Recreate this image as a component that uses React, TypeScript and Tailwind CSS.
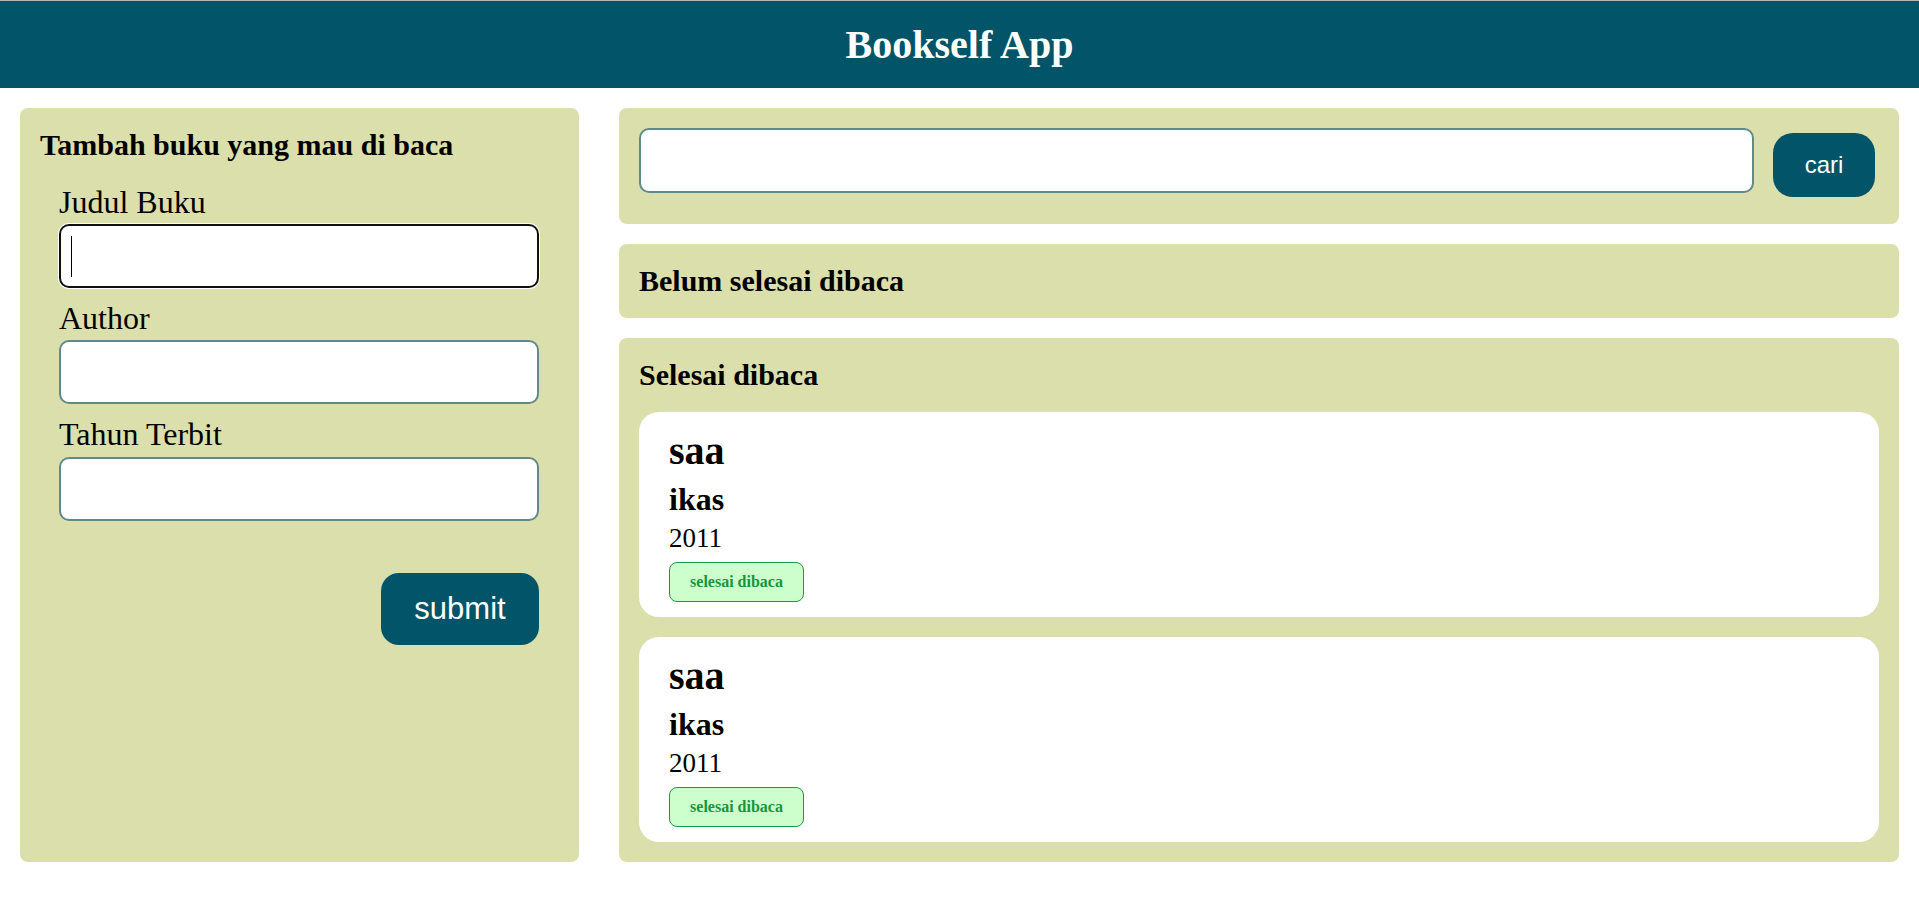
import React from "react";

function BookCard() {
  return (
    <div className="rounded-[20px] bg-white pt-[16px] pb-[15px] pl-[30px] pr-[30px]">
      <h2 className="text-[40px] leading-[46px] font-bold">saa</h2>
      <h3 className="mt-[8px] text-[32px] leading-[34px] font-bold">ikas</h3>
      <p className="mt-[7px] text-[27px] leading-[30px]">2011</p>
      <button className="mt-[9px] flex h-[40px] w-[135px] items-center justify-center rounded-[8px] border border-[#1a9a45] bg-[#ccffcc] text-[16px] font-bold text-[#15963f] font-['Liberation_Serif',serif]">
        selesai dibaca
      </button>
    </div>
  );
}

export default function App() {
  return (
    <div className="min-h-[917px] bg-white text-black font-['Liberation_Serif',serif]">
      <header className="flex h-[88px] items-center justify-center border-t border-[#b5b5b5] bg-[#025568]">
        <h1 className="text-[40px] leading-[46px] font-bold text-white">Bookself App</h1>
      </header>

      <main className="flex gap-[40px] px-[20px] pt-[20px]">
        <section className="w-[559px] shrink-0 rounded-[8px] bg-[#dbdfac] px-[20px] pt-[20px]">
          <h2 className="text-[30px] leading-[34px] font-bold">Tambah buku yang mau di baca</h2>
          <form className="mt-[23px] ml-[19px] mr-[20px] flex flex-col">
            <label className="text-[32px] leading-[34px]">Judul Buku</label>
            <div className="relative mt-[5px]">
              <input
                type="text"
                className="h-[64px] w-full rounded-[10px] border-2 border-[#111] bg-white px-[10px] shadow-[0_0_0_1px_#ffffff] outline-none"
              />
              <span className="absolute left-[12px] top-[12px] h-[41px] w-[1px] bg-black" />
            </div>
            <label className="mt-[13px] text-[32px] leading-[34px]">Author</label>
            <input
              type="text"
              className="mt-[5px] h-[64px] w-full rounded-[10px] border-2 border-[#5e8b88] bg-white px-[10px] outline-none"
            />
            <label className="mt-[13px] text-[32px] leading-[34px]">Tahun Terbit</label>
            <input
              type="text"
              className="mt-[6px] h-[64px] w-full rounded-[10px] border-2 border-[#5e8b88] bg-white px-[10px] outline-none"
            />
            <button
              type="button"
              className="mt-[52px] flex h-[72px] w-[158px] items-center justify-center self-end rounded-[18px] bg-[#025568] text-[31px] text-white font-['Liberation_Sans',Arial,sans-serif]"
            >
              submit
            </button>
          </form>
        </section>

        <div className="flex min-w-0 flex-1 flex-col gap-[20px]">
          <section className="flex items-start gap-[19px] rounded-[8px] bg-[#dbdfac] pt-[20px] pb-[27px] pl-[20px] pr-[24px]">
            <input
              type="text"
              className="h-[65px] min-w-0 flex-1 rounded-[10px] border-2 border-[#5e8b88] bg-white px-[10px] outline-none"
            />
            <button
              type="button"
              className="mt-[5px] flex h-[64px] w-[102px] items-center justify-center rounded-[20px] bg-[#025568] text-[24px] text-white font-['Liberation_Sans',Arial,sans-serif]"
            >
              cari
            </button>
          </section>

          <section className="rounded-[8px] bg-[#dbdfac] px-[20px] py-[20px]">
            <h2 className="text-[30px] leading-[34px] font-bold">Belum selesai dibaca</h2>
          </section>

          <section className="rounded-[8px] bg-[#dbdfac] px-[20px] py-[20px]">
            <h2 className="text-[30px] leading-[34px] font-bold">Selesai dibaca</h2>
            <div className="mt-[20px] flex flex-col gap-[20px]">
              <BookCard />
              <BookCard />
            </div>
          </section>
        </div>
      </main>
    </div>
  );
}
